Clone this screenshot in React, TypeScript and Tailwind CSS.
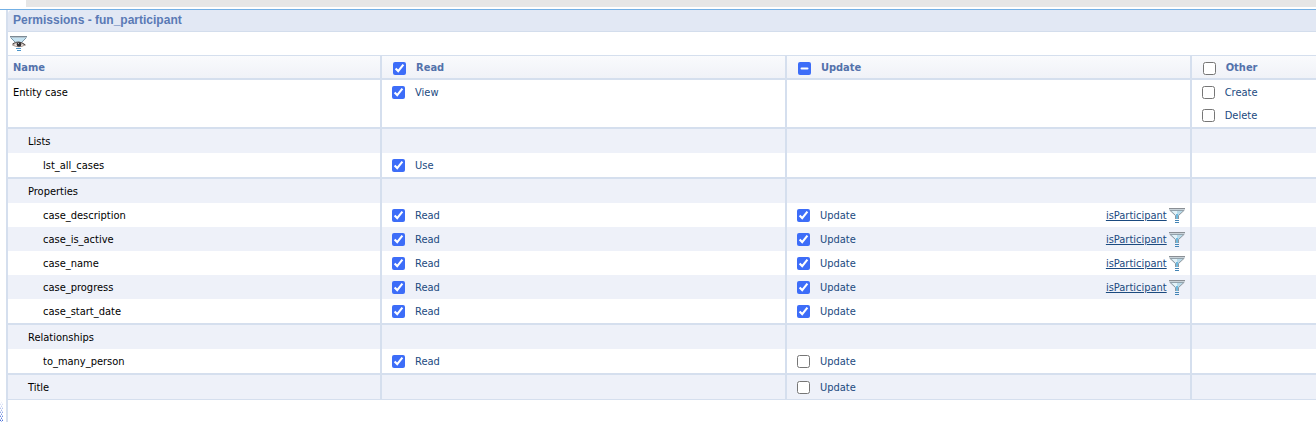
import { useEffect, useRef } from 'react';

type Permission = { label: string; checked: boolean; filter?: string };

type Row = {
  name: string;
  level: 0 | 1 | 2;
  shaded?: boolean;
  last?: boolean;
  read?: Permission[];
  update?: Permission[];
  other?: Permission[];
};

const read: Permission[] = [{ label: 'Read', checked: true }];
const update: Permission[] = [{ label: 'Update', checked: true }];
const updateOff: Permission[] = [{ label: 'Update', checked: false }];
const updateFiltered: Permission[] = [{ label: 'Update', checked: true, filter: 'isParticipant' }];

const rows: Row[] = [
  {
    name: 'Entity case',
    level: 0,
    last: true,
    read: [{ label: 'View', checked: true }],
    other: [
      { label: 'Create', checked: false },
      { label: 'Delete', checked: false },
    ],
  },
  { name: 'Lists', level: 1, shaded: true },
  { name: 'lst_all_cases', level: 2, last: true, read: [{ label: 'Use', checked: true }] },
  { name: 'Properties', level: 1, shaded: true },
  { name: 'case_description', level: 2, read, update: updateFiltered },
  { name: 'case_is_active', level: 2, shaded: true, read, update: updateFiltered },
  { name: 'case_name', level: 2, read, update: updateFiltered },
  { name: 'case_progress', level: 2, shaded: true, read, update: updateFiltered },
  { name: 'case_start_date', level: 2, last: true, read, update },
  { name: 'Relationships', level: 1, shaded: true },
  { name: 'to_many_person', level: 2, last: true, read, update: updateOff },
  { name: 'Title', level: 1, shaded: true, update: updateOff },
];

const indent = { 0: 'pl-[5px]', 1: 'pl-5', 2: 'pl-[35px]' };

function Funnel() {
  return (
    <svg width="16" height="16" viewBox="0 0 16 16" aria-hidden="true">
      <path d="M1 2h14L9.500 8v3h-3V8z" fill="#b9dbea" />
      <path d="M3 3h5v4H6.500z" fill="#e2f2f8" />
      <path d="M7 6h2v5H7z" fill="#6fb9de" />
      <path d="M0.500 2L6.500 7.500V11M15.500 2L9.500 7.500V11" fill="none" stroke="#8f979e" />
      <path d="M0 0h16v1H0z" fill="#8a8f95" />
      <path d="M0 1h16v1H0z" fill="#c9d3d9" />
      <path d="M1 2h14v1H1z" fill="#93a2ac" />
      <path d="M6 12h4v1H6zM6 14h4v1H6z" fill="#4384b5" />
    </svg>
  );
}

function FunnelEye() {
  return (
    <svg width="17" height="16" viewBox="0 0 17 16" aria-hidden="true">
      <path d="M1 2h15l-5 6H6z" fill="#c5e3f2" />
      <path d="M0 0h17v1H0z" fill="#7d8a94" />
      <path d="M0 1h17v1H0z" fill="#b4c6d1" />
      <path d="M1 2l4 4M16 2l-4 4" stroke="#7e98a8" />
      <path d="M2.500 9q6-4.500 12.500 0q-6 3.500-12.500 0z" fill="#eee4de" stroke="#a39690" />
      <path d="M2.500 8q6-4.500 13 1" fill="none" stroke="#4b4340" />
      <circle cx="9" cy="8.500" r="2.300" fill="#302d30" />
      <path d="M8 7h1v1H8z" fill="#a9b1b9" />
      <path d="M6 12h5v1H6zM7 14h4v1H7z" fill="#4b94c9" />
    </svg>
  );
}

function Grip() {
  return (
    <svg width="3" height="22" viewBox="0 0 3 22" shapeRendering="crispEdges" aria-hidden="true">
      <defs>
        <pattern id="dots" width="2" height="4" patternUnits="userSpaceOnUse">
          <path d="M0 0h1v1H0zM1 2h1v1H1z" fill="#3f66d6" />
          <path d="M1 1h1v1H1zM0 3h1v1H0z" fill="#a9bcf0" />
        </pattern>
        <linearGradient id="fade" x2="0" y2="1">
          <stop offset="0" stopColor="#fff" />
          <stop offset="1" stopColor="#fff" stopOpacity="0" />
        </linearGradient>
      </defs>
      <path d="M0 0h3v22H0z" fill="url(#dots)" />
      <path d="M0 0h3v22H0z" fill="url(#fade)" />
    </svg>
  );
}

function Check({ label, checked, mixed }: { label: string; checked?: boolean; mixed?: boolean }) {
  const ref = useRef<HTMLInputElement>(null);

  useEffect(() => {
    if (ref.current) ref.current.indeterminate = !!mixed;
  }, [mixed]);

  return (
    <label className="flex items-center gap-[10px]">
      <input ref={ref} type="checkbox" defaultChecked={checked} className="size-[13px] accent-[#3d6df8]" />
      <span>{label}</span>
    </label>
  );
}

function PermissionCell({ items = [], className }: { items?: Permission[]; className: string }) {
  return (
    <td className={`${className} pl-[10px] pr-[5px] text-[#1b4a7f]`}>
      {items.map((item) => (
        <div key={item.label} className="flex h-[23px] items-center justify-between">
          <Check label={item.label} checked={item.checked} />
          {item.filter && (
            <span className="flex items-center gap-0.5">
              <a href="#" className="underline">{item.filter}</a>
              <button type="button" aria-label="Edit filter"><Funnel /></button>
            </span>
          )}
        </div>
      ))}
    </td>
  );
}

export default function App() {
  return (
    <div className="flex h-screen flex-col overflow-hidden bg-white font-['DejaVu_Sans_Condensed','Noto_Sans',sans-serif] text-[11px] leading-4">
      <div className="ml-[26px] h-[7px] shrink-0 bg-[#e6e6e6]" />
      <div className="mt-0.5 flex grow border-t border-[#73b0e5]">
        {/* Splitter */}
        <div className="flex w-1.5 shrink-0 items-end">
          <Grip />
        </div>

        <div className="grow border-l-2 border-[#d5dfee]">
          <h1 className="h-[22px] rounded-tl border-b border-[#d3ddec] bg-[#e2e8f4] pl-[5px] font-['Liberation_Sans',sans-serif] text-xs leading-5 font-bold text-[#5a7ab5]">
            Permissions - fun_participant
          </h1>
          <div className="flex h-[23px] items-center pl-0.5">
            <button type="button" aria-label="Show filters"><FunnelEye /></button>
          </div>

          <table className="w-full table-fixed border-separate border-spacing-0 text-left">
            <colgroup>
              <col className="w-[28.6%]" />
              <col className="w-[30.95%]" />
              <col className="w-[30.95%]" />
              <col />
            </colgroup>
            <thead>
              <tr className="h-[25px] bg-linear-to-b from-[#fafbfd] to-[#eff1f7] text-[#5372ab] *:border-t *:border-b-2 *:border-[#d5dfee] *:pt-0.5">
                <th className="border-r-2 pl-[5px]">Name</th>
                <th className="border-r-2 pl-[11px]"><Check label="Read" checked /></th>
                <th className="border-r-2 pl-[11px]"><Check label="Update" mixed /></th>
                <th className="pl-[11px]"><Check label="Other" /></th>
              </tr>
            </thead>
            <tbody>
              {rows.map((row, i) => {
                const bottom = row.last ? 'border-b-2' : i === rows.length - 1 ? 'border-b' : '';
                const cell = `border-[#d5dfee] pt-px align-top ${bottom}`;
                return (
                  <tr key={row.name} className={row.shaded ? 'bg-[#eef1f9]' : 'bg-white'}>
                    <td className={`${cell} border-r-2 ${indent[row.level]}`}>
                      <div className="flex h-[23px] items-center">{row.name}</div>
                    </td>
                    <PermissionCell items={row.read} className={`${cell} border-r-2`} />
                    <PermissionCell items={row.update} className={`${cell} border-r-2`} />
                    <PermissionCell items={row.other} className={cell} />
                  </tr>
                );
              })}
            </tbody>
          </table>
        </div>
      </div>
    </div>
  );
}
